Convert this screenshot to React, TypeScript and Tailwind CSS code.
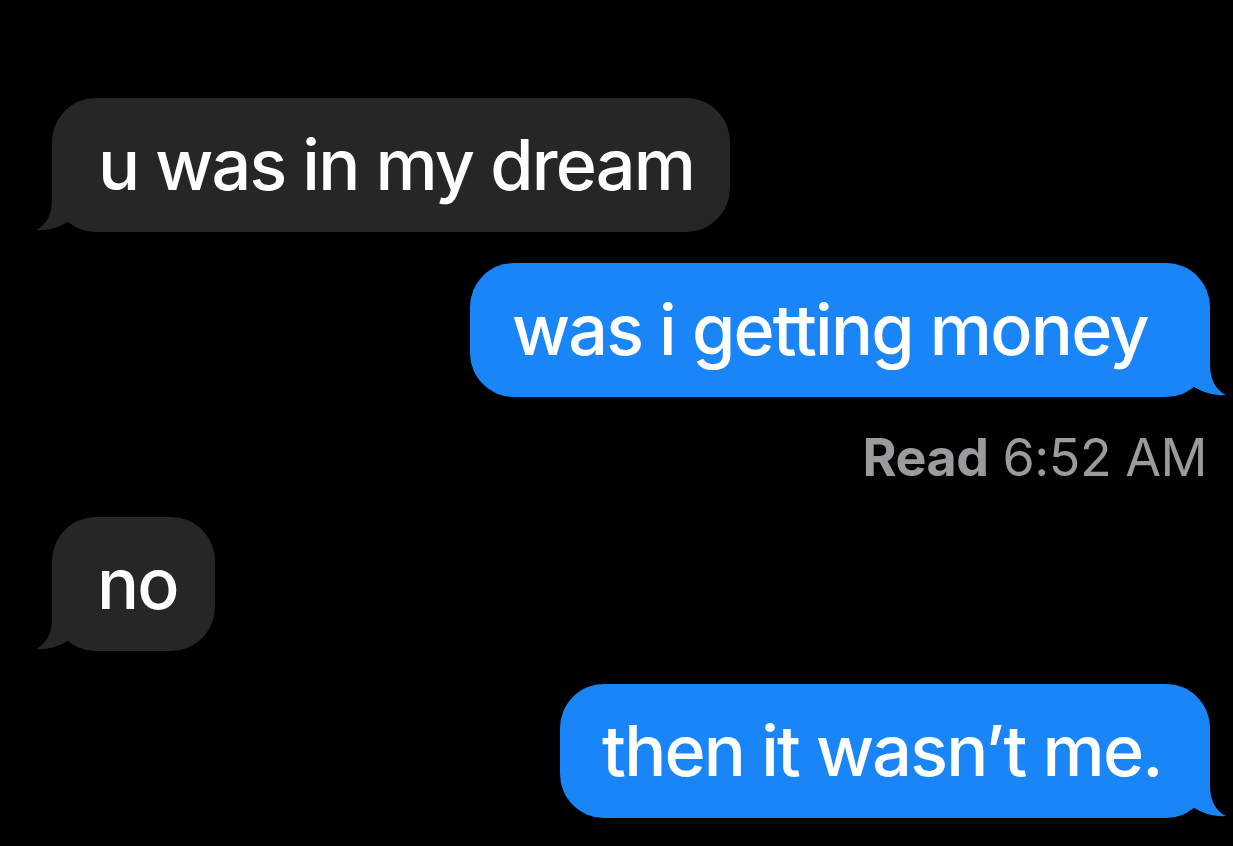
import React from "react";

type Message = {
  text: string;
  fromMe: boolean;
  width: string;
  pad: string;
};

const messages: Message[] = [
  { text: "u was in my dream", fromMe: false, width: "w-[678px]", pad: "pl-[46px]" },
  { text: "was i getting money", fromMe: true, width: "w-[740px]", pad: "pl-[42px]" },
  { text: "no", fromMe: false, width: "w-[163px]", pad: "pl-[45px]" },
  { text: "then it wasn\u2019t me.", fromMe: true, width: "w-[650px]", pad: "pl-[42px]" },
];

// tail shape of the bubble, drawn for the left side and mirrored for the right
const Tail = ({ color, right }: { color: string; right: boolean }) => (
  <svg
    width="70"
    height="50"
    viewBox="0 0 70 50"
    className={right ? "absolute bottom-0 right-[-16px] -scale-x-100" : "absolute bottom-0 left-[-16px]"}
  >
    <path
      d="M16 0 L16 18 C16 33 10 43 0 48 C14 49 28 44 37 36 C45 44 56 50 70 50 L70 0 Z"
      fill={color}
    />
  </svg>
);

const Bubble = ({ msg }: { msg: Message }) => {
  const color = msg.fromMe ? "#1a85f6" : "#262629";
  return (
    <div
      className={`relative flex h-[134px] items-center rounded-[44px] ${msg.width} ${msg.pad} whitespace-nowrap text-[70px] font-medium tracking-[-0.025em] text-white ${
        msg.fromMe ? "self-end bg-[#1a85f6]" : "self-start bg-[#262629]"
      }`}
    >
      <Tail color={color} right={msg.fromMe} />
      <span className="relative leading-none">{msg.text}</span>
    </div>
  );
};

export default function App() {
  return (
    <div
      className="min-h-[846px] w-full bg-black pl-[52px] pr-[23px] pt-[98px]"
      style={{ fontFamily: "Inter, 'Noto Sans', sans-serif" }}
    >
      <div className="flex flex-col">
        <Bubble msg={messages[0]} />
        <div className="mt-[31px] flex flex-col">
          <Bubble msg={messages[1]} />
        </div>
        <div className="mt-[35px] self-end pr-[3px] text-[52px] leading-none tracking-[-0.01em] text-[#9a9a9f]">
          <span className="font-bold">Read</span> 6:52 AM
        </div>
        <div className="mt-[33px] flex flex-col">
          <Bubble msg={messages[2]} />
        </div>
        <div className="mt-[33px] flex flex-col">
          <Bubble msg={messages[3]} />
        </div>
      </div>
    </div>
  );
}
